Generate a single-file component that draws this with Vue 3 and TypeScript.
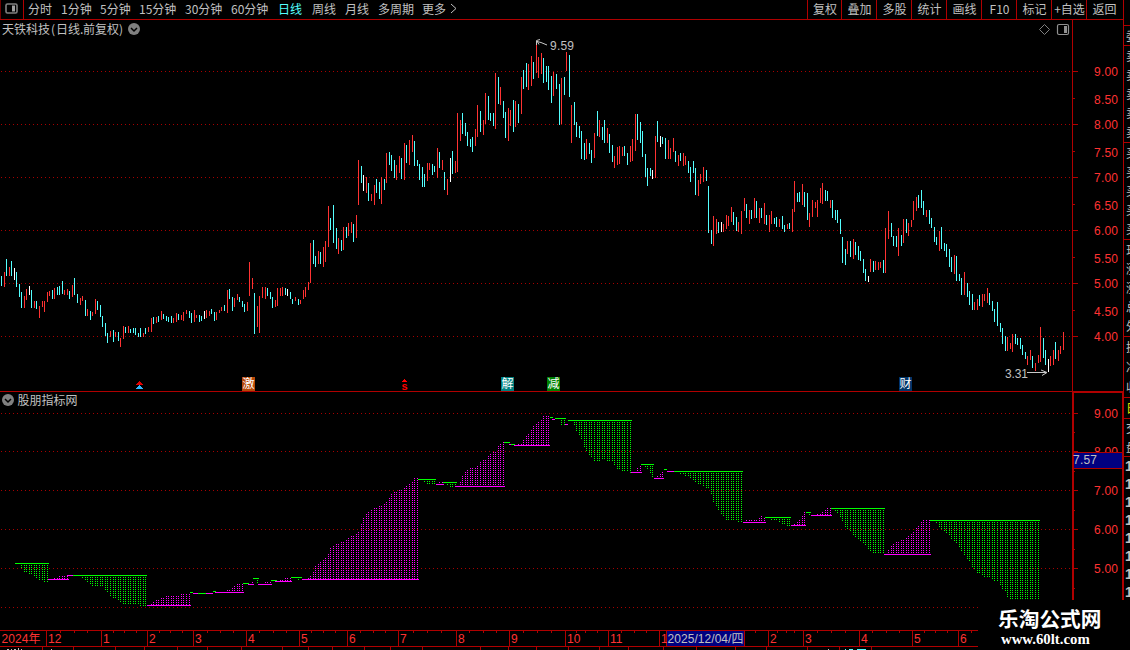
<script setup lang="ts">
type Tone = 'r' | 'c' | 'w'
interface Bar { x: number; tone: Tone; top: number; bottom: number }
interface Step { tone: 'g' | 'm'; x0: number; x1: number; y: number; edge: number[][] }

const periods = ['分时', '1分钟', '5分钟', '15分钟', '30分钟', '60分钟', '日线', '周线', '月线', '多周期', '更多']
const tools = ['复权', '叠加', '多股', '统计', '画线', 'F10', '标记', '+自选', '返回']

const priceData = `
1c276-286 4r272-287 6c259-276 9r267-276 11c261-276 14w268-280 16c272-287 19c284-297 21c292-308 24r296-308
26r289-300 29w286-295 31c290-308 34r301-308 36c301-309 39r306-318 42r301-307 44r301-312 47r292-302 49r291-296
52c290-299 54r288-299 57c287-295 59c286-295 62c281-294 64r290-295 67r289-295 69c291-299 72r285-297 74c278-295
77c294-303 80r298-305 82r296-301 85c300-316 87r309-316 90c311-320 92r312-316 95r299-314 97c301-310 100c305-317
102c316-327 105c323-336 107c333-343 110r331-337 113c330-342 115r332-337 118c332-341 120r338-347 123r326-339 125c327-333
128r326-333 130c329-333 133c328-333 135c328-335 138c333-337 140c328-337 143r333-337 145c328-334 148r327-332 151r318-332
153c317-324 156r317-323 158c316-322 161r311-320 163c314-319 166c316-321 168c317-322 171c316-323 173r318-323 176r313-322
178c314-320 181r315-320 183r312-321 186r310-314 189c311-318 191c313-323 194r310-322 196r315-318 199c315-322 201c316-321
204w311-319 206r310-318 209r311-316 211c309-314 214c312-321 216r312-320 219r310-313 221r307-311 224c305-311 227r290-313
229c289-299 232c297-311 234r298-307 237r294-300 239c297-302 242c301-307 244c304-312 247r302-311 249r262-296 252r278-289
254c293-334 257r306-327 259r296-333 262r287-298 265r287-299 267c288-296 270c292-299 272c297-308 275r300-307 277r288-306
280r288-296 282r287-296 285c288-295 287w289-296 290c292-299 292c299-304 295r297-301 298c299-305 300r300-304 303r290-299
305r287-297 308r282-290 310r243-283 313c240-264 315c256-267 318r251-264 320c252-264 323r247-267 325r241-262 328r206-247
330c218-230 333c205-243 336c228-249 338r238-254 341c240-251 343r227-250 346c227-238 348r223-236 351r222-233 353c224-242
356r215-238 358r160-205 361c166-183 363w175-191 366r177-193 368c183-201 371r194-201 374r185-205 376c179-193 379c182-199
381r177-204 384c179-190 386r153-183 389c152-165 391c155-171 394c160-178 396r165-180 399r156-173 401c158-179 404r143-180
406c145-163 409r140-165 412r135-152 414c141-166 417c160-166 419c164-180 422c167-187 424c174-187 427r163-181 429r163-170
432c164-175 434c166-172 437r148-178 439c152-168 442r160-170 444c172-190 447r179-195 450w158-182 452c151-174 455r161-173
457r113-172 460r120-141 462c113-134 465c123-136 467c132-146 470c139-147 472c137-152 475r129-146 477r105-137 480c111-132
483r120-135 485r93-124 488c96-120 490c113-121 493c113-126 495r73-129 498c77-104 500r87-105 503c101-118 505c112-138
508r108-141 510r110-126 513c100-132 515r101-127 518c104-123 521r77-114 523c70-89 526c63-87 528r64-90 531r56-86
533c62-79 536r43-73 538r57-78 541r53-74 543c58-83 546c66-82 548c66-90 551c76-103 553r72-96 556c74-89
559c84-125 561r78-124 564c77-95 566r52-71 569c55-97 571r105-143 574c102-125 576c122-137 579c126-138 581c131-159
584c143-160 586r139-159 589c143-154 591c150-163 594r133-158 597c111-136 599r120-137 602c127-140 604c120-143 607r128-143
609c134-153 612c145-162 614r156-168 617r147-165 619r146-164 622r147-156 624c146-156 627c153-165 630r146-162 632r139-161
635r114-151 637c114-140 640c122-143 642c131-157 645c154-177 647c168-186 650c168-176 652w170-179 655r136-178 657c121-142
660w136-147 662c137-144 665c138-159 668r140-159 670r148-159 673r138-152 675c151-162 678r155-166 680c153-161 683r153-166
685r156-165 688c161-173 690c167-182 693c161-173 695c168-195 698r180-196 700r174-184 703r167-182 706c170-181 708c186-233
711c230-244 713r216-246 716r219-234 718c222-233 721w222-232 723r224-232 726r215-229 728r216-226 731r207-222 733c212-225
736c217-231 738r222-232 741r211-234 744r198-211 746c204-218 749r210-224 751c210-219 754r198-218 756c201-218 759r208-223
761c208-218 764r203-224 766c215-225 769r215-232 771r211-224 774c218-224 776c217-227 779r219-227 782c216-229 784c225-232
787r224-229 789c223-229 792r209-232 794r181-212 797c193-202 799c192-202 802r184-205 804c192-207 807c193-220 809r213-227
812r200-217 815r202-208 817r200-217 820r188-203 822r183-204 825c190-201 827c191-201 830r200-208 832c200-218 835c210-220
837c210-223 840c219-234 842c237-263 845c249-265 847r241-254 850c241-257 853r239-259 855c242-255 858c246-260 860c251-261
863c259-273 865c269-281 868w276-282 870r259-272 873c261-272 875r261-270 878r262-270 880r262-268 883c260-273 885r228-273
888r211-239 891c223-237 893c236-246 896c236-247 898r228-256 901c235-246 903r219-243 906c219-233 908r223-236 911r220-227
913r201-220 916r197-211 918c195-208 921c190-208 923c201-215 926r210-217 929c210-224 931c218-228 934c227-242 936c237-245
939r231-251 941c227-249 944c243-251 946c244-257 949c249-267 951c257-272 954r255-274 956c256-281 959c274-281 961c278-295
964r272-295 967c283-297 969c291-305 972c294-310 974r302-310 977r299-310 979c295-306 982r294-307 984r294-301 987r288-303
989c293-305 992c301-311 994c309-322 997c302-326 1000c323-332 1002c328-344 1005c336-351 1007r337-351 1010r343-349 1012r334-352
1015c334-344 1017c338-345 1020c338-349 1022c345-355 1025c352-359 1027r356-365 1030r350-360 1032c356-368 1035r363-371 1038r355-363
1040r327-362 1043c338-358 1045c350-365 1048w359-372 1050r356-366 1053r350-365 1055c342-359 1058r350-361 1060r346-354 1063r332-350`

const bars: Bar[] = [...priceData.matchAll(/(\d+)([rcw])(\d+)-(\d+)/g)].map((m) => ({
  x: +m[1], tone: m[2] as Tone, top: +m[3], bottom: +m[4],
}))
const barPath = (tone: Tone) =>
  bars.filter((b) => b.tone === tone).map((b) => `M${b.x + 0.5} ${b.top}V${b.bottom}`).join('')

// tone, left, right, level, then x:y pairs of the moving edge
const stepData = `
g 15 49 563 19:564 21:568 24:571 26:572 29:573 31:573 34:575 36:577 39:579 42:580 44:581 47:581
m 48 69 579 52:579 54:578 57:577 59:576 62:575 67:575
m 67 73 575
g 73 147 575 77:575 80:576 82:577 85:579 87:581 90:583 92:585 95:586 102:586 105:589 107:592 110:595 113:597 115:598 118:600 120:602 123:604 138:604 140:605 145:605
m 147 191 605 148:605 151:603 153:602 156:600 158:600 161:598 163:597 166:596 171:596 173:595 178:595 181:594 186:593 189:593
g 190 193 592
m 193 213 593
g 198 206 593
g 213 216 591
m 215 244 592 219:592 222:591 227:590 229:589 232:587 234:585 237:584 239:583 242:583
g 243 249 583
m 248 254 584 251:584 252:581
g 253 259 578 256:578 257:583
m 258 272 584 262:584 265:582 267:581 270:581
g 271 277 580
m 275 292 581 280:580 282:579 285:577 290:577
g 291 302 577 294:578 299:579
m 302 419 579 307:579 310:576 313:571 315:566 318:564 320:561 323:559 326:556 328:553 330:548 333:545 336:543 343:542 346:539 351:536 354:535 358:532 361:523 363:518 366:514 368:511 371:510 376:507 381:506 384:503 386:501 389:497 391:494 394:492 399:489 404:488 406:485 409:484 412:481 414:478 417:478
g 418 436 479 420:479 422:480 424:482 427:484 434:484
m 436 444 484 438:484 439:482 442:482
g 443 457 482 445:482 447:485 450:486 452:487 455:487
m 455 505 486 457:485 460:481 462:475 465:471 467:469 470:468 475:467 477:466 480:462 482:461 485:459 487:456 490:453 493:451 495:451 498:445 500:443 503:441
g 504 510 442
m 509 513 444
g 511 515 444
m 514 550 445 518:444 521:444 523:439 526:436 528:433 531:430 533:426 536:424 538:421 541:419 543:416 548:416
g 550 553 417
m 552 555 419
g 555 566 418 558:418 560:420 561:425 564:425
m 565 568 424
g 568 632 420 571:421 574:424 576:430 579:434 581:439 584:446 586:450 589:454 591:457 594:460 597:460 602:459 607:460 612:461 614:465 617:468 620:469 623:470 627:471 630:472
m 631 642 472 635:471 637:467 640:465
g 641 654 464 643:464 645:466 647:468 650:472 652:477
m 654 664 478 656:478 657:476 660:473 662:471
g 664 667 469
m 667 674 471
g 674 743 471 676:471 678:472 683:474 688:476 690:477 693:479 695:481 698:483 700:484 703:486 708:487 711:494 713:501 716:506 718:509 721:513 723:516 726:519 728:520 736:520 738:521 741:522
m 743 766 522 744:521 746:519 756:519 758:517 761:516 764:517
g 765 791 517 768:517 771:519 776:520 781:522 784:524 789:525
m 791 806 525 792:525 794:524 797:522 799:519 802:515 804:512
g 806 811 512 808:512 809:514
m 811 832 515 813:515 817:514 820:513 822:511 825:509 827:508 830:508
g 831 885 508 833:508 835:510 837:513 840:517 842:521 845:527 847:529 850:530 853:534 858:538 860:540 863:542 865:545 868:548 870:551 875:552 880:553 883:553
m 884 931 554 886:553 888:550 891:546 893:543 897:542 902:540 905:537 908:536 911:534 913:532 916:528 918:525 921:522 923:520 926:519 929:519
g 930 1040 520 932:520 934:521 936:523 939:526 941:528 944:531 949:535 951:538 954:541 959:547 961:551 964:555 967:559 969:561 972:566 974:569 977:572 979:573 984:576 989:577 992:578 994:580 997:581 1000:584 1002:588 1005:591 1007:596 1010:600 1038:600`

const steps: Step[] = stepData.trim().split('\n').map((line) => {
  const [tone, x0, x1, y, ...rest] = line.split(' ')
  return { tone: tone as 'g' | 'm', x0: +x0, x1: +x1, y: +y, edge: rest.map((p) => p.split(':').map(Number)) }
})

function edgeAt(edge: number[][], x: number): number | null {
  for (let i = 1; i < edge.length; i++) {
    const [ax, ay] = edge[i - 1]
    const [bx, by] = edge[i]
    if (x >= ax && x <= bx) return Math.round(ay + ((by - ay) * (x - ax)) / (bx - ax))
  }
  return null
}
const levelPath = (tone: string) =>
  steps.filter((s) => s.tone === tone).map((s) => `M${s.x0} ${s.y + 0.5}H${s.x1}`).join('')
const columnPath = (tone: string) => {
  let d = ''
  for (const s of steps.filter((v) => v.tone === tone)) {
    // rising columns keep their dots on even rows
    const start = s.y % 2 ? s.y : s.y - 1
    for (const { x } of bars) {
      const e = edgeAt(s.edge, x)
      if (e === null || e === s.y) continue
      d += e > s.y ? `M${x + 0.5} ${s.y + 2}V${e + 1}` : `M${x + 0.5} ${start}V${e}`
    }
  }
  return d
}

const upperGrid = [71, 124, 177, 230, 283, 336]
const upperMinor = [98, 151, 204, 257, 310]
const upperLabels = [
  ['9.00', 76], ['8.50', 104], ['8.00', 129], ['7.50', 157], ['7.00', 182], ['6.50', 210],
  ['6.00', 235], ['5.50', 263], ['5.00', 288], ['4.50', 316], ['4.00', 341],
] as [string, number][]
const lowerGrid = [413, 451, 490, 529, 568, 607]
const lowerMinor = [432, 471, 510, 549, 588]
const lowerLabels = [['9.00', 418], ['8.00', 456], ['7.00', 495], ['6.00', 534], ['5.00', 573]] as [string, number][]

const badges = [
  { x: 242, label: '激', kind: 'orange' },
  { x: 501, label: '解', kind: 'teal' },
  { x: 547, label: '减', kind: 'green' },
  { x: 899, label: '财', kind: 'navy' },
]

const months = [
  ['12', 46], ['1', 101], ['2', 147], ['3', 193], ['4', 246], ['5', 299], ['6', 347], ['7', 398], ['8', 456], ['9', 509],
  ['10', 565], ['11', 608], ['1', 659], ['2', 768], ['3', 803], ['4', 859], ['5', 912], ['6', 958],
] as [string, number][]
const weekTicks = [
  60, 74, 87, 113, 124, 136, 159, 170, 182, 207, 220, 233, 259, 273, 286, 311, 323, 335, 360, 373, 385, 413, 427, 441,
  469, 483, 496, 523, 537, 551, 576, 585, 597, 621, 634, 646, 755, 777, 786, 794, 817, 831, 845, 872, 886, 899, 924,
  935, 947, 971,
]
const tabTicks = [
  42, 73, 115, 144, 177, 207, 241, 282, 308, 332, 364, 390, 422, 480, 508, 536, 568, 599, 628, 663, 696, 735, 766, 807,
  839, 871,
]

const quoteCells = [
  { h: 26, rows: [] }, { h: 20, rows: ['委'] },
  { h: 97, rows: ['卖', '卖', '卖', '卖', '卖'] },
  { h: 97, rows: ['买', '买', '买', '买', '买'] },
  { h: 97, rows: ['现', '涨', '涨', '总', '外'] },
  { h: 61, rows: ['换', '净', '收'] },
  { h: 21, rows: ['日'], hot: true },
  { h: 38, rows: ['交', '盘'] },
] as { h: number; rows: string[]; hot?: boolean }[]
</script>

<template>
  <div class="terminal">
    <div class="board">
      <header class="toolbar">
        <div class="panel-toggle">
          <svg width="13" height="11" viewBox="0 0 13 11">
            <rect x="1" y="1" width="11" height="9" rx="1.5" fill="none" stroke="#808080" stroke-width="1.6" />
            <rect x="7" y="2.5" width="3" height="6" fill="#a0a0a0" />
          </svg>
        </div>
        <nav class="periods">
          <span v-for="p in periods" :key="p" :class="{ active: p === '日线' }">{{ p }}</span>
          <svg width="8" height="11" viewBox="0 0 8 11"><path d="M1 1L6 5.5L1 10" fill="none" stroke="#c0c0c0" /></svg>
        </nav>
        <nav class="tools">
          <span v-for="t in tools" :key="t">{{ t }}</span>
        </nav>
      </header>

      <svg class="pane" width="1124" height="371" viewBox="0 20 1124 371">
        <g class="grid"><path v-for="y in upperGrid" :key="y" :d="`M1 ${y + 0.5}H1070`" /></g>
        <g class="bars">
          <path class="up" :d="barPath('r')" />
          <path class="down" :d="barPath('c')" />
          <path class="flat" :d="barPath('w')" />
        </g>
        <text class="caption" x="2" y="34" textLength="48">天铁科技</text>
        <text class="caption" x="51" y="34">(</text>
        <text class="caption" x="56" y="34" textLength="24">日线</text>
        <text class="caption" x="80" y="34">.</text>
        <text class="caption" x="83" y="34" textLength="36">前复权</text>
        <text class="caption" x="119" y="34">)</text>
        <circle cx="134" cy="29" r="6" fill="#808080" />
        <path d="M131 28L134 31L137 28" fill="none" stroke="#000" stroke-width="1.5" />
        <path d="M1044.500 24.500L1049.500 29.500L1044.500 34.500L1039.500 29.500Z" fill="none" stroke="#808080" />
        <rect x="1057.500" y="24.500" width="11" height="10" rx="1.500" fill="none" stroke="#909090" stroke-width="1.200" />
        <rect x="1064" y="26" width="3" height="7" fill="#909090" />

        <g class="pointer">
          <path d="M537 41.500L541 42.500L547 45M536.500 45V40.500L540 39.500M537 41L539 44.500" />
          <path d="M1027 372.500H1046M1041 370L1047 372.500L1042 375.500" />
        </g>
        <text class="note" x="550" y="50" textLength="24">9.59</text>
        <text class="note" x="1005" y="378" textLength="23">3.31</text>

        <g shape-rendering="crispEdges">
          <path d="M139 381h1v1h1v1h1v1h1v1h-7v-1h1v-1h1v-1h1z" fill="#e00000" />
          <path d="M139 385h1v1h1v1h1v1h1v1h-7v-1h1v-1h1v-1h1z" fill="#30b8ff" />
          <path d="M404 379h1v1h1v1h1v1h-5v-1h1v-1h1z" fill="#f00" />
        </g>
        <text class="signal" x="401.500" y="389.500">s</text>
        <g v-for="b in badges" :key="b.x">
          <rect :class="b.kind" :x="b.x" y="377" width="13" height="14" />
          <text class="badge" :x="b.x + 0.500" y="388">{{ b.label }}</text>
        </g>

        <g class="axis">
          <path d="M1072.500 20V391M1123.500 20V391" />
          <path v-for="y in upperGrid" :key="y" :d="`M1073 ${y + 0.5}h5`" />
          <path v-for="y in upperMinor" :key="y" :d="`M1073 ${y + 0.5}h2`" />
        </g>
        <text v-for="[t, y] in upperLabels" :key="t" class="scale" x="1094" :y="y" textLength="24">{{ t }}</text>
      </svg>

      <svg class="pane" width="1124" height="239" viewBox="0 391 1124 239">
        <g class="grid"><path v-for="y in lowerGrid" :key="y" :d="`M1 ${y + 0.5}H1070`" /></g>
        <g class="steps">
          <path class="dots green-line" :d="columnPath('g')" />
          <path class="dots pink-line" :d="columnPath('m')" />
          <path class="pink-line" :d="levelPath('m')" />
          <path class="green-line" :d="levelPath('g')" />
        </g>
        <circle cx="8" cy="400" r="6" fill="#808080" />
        <path d="M5 399L8 402L11 399" fill="none" stroke="#000" stroke-width="1.500" />
        <text class="caption" x="17.500" y="405" textLength="60">股朋指标网</text>
        <text v-for="[t, y] in lowerLabels" :key="t" class="scale" x="1094" :y="y" textLength="24">{{ t }}</text>
        <g class="axis">
          <path d="M0 391.500H1124" />
          <path d="M1073 630V392H1123V630" stroke-width="2" />
          <path v-for="y in lowerGrid" :key="y" :d="`M1074 ${y + 0.5}h4`" />
          <path v-for="y in lowerMinor" :key="y" :d="`M1074 ${y + 0.5}h1`" />
        </g>
        <rect x="1074" y="452" width="48" height="17" fill="#000080" />
        <path class="axis" d="M1074 452.500H1122M1074 468.500H1122" />
        <text class="note" x="1073" y="464" textLength="24">7.57</text>
      </svg>

      <svg class="pane" width="1124" height="20" viewBox="0 630 1124 20">
        <g class="axis">
          <path d="M0 630.500H1124M0 646.500H1124" />
          <path v-for="[t, x] in months" :key="x" :d="`M${x + 0.5} 631V646`" />
          <path v-for="x in weekTicks" :key="x" :d="`M${x + 0.5} 631v2`" />
          <path v-for="x in tabTicks" :key="x" :d="`M${x + 0.5} 647v3`" />
          <path d="M666.500 631V646M744.500 631V646" />
        </g>
        <text class="scale" x="1.500" y="643" textLength="39">2024年</text>
        <text v-for="[t, x] in months" :key="x" class="scale" :x="x + 2" y="643">{{ t }}</text>
        <rect x="667" y="631" width="77" height="15" fill="#000080" />
        <text class="note" x="667.500" y="643" textLength="76">2025/12/04/四</text>
        <g fill="#c0c0c0">
          <path d="M7 649h2v1h-2zM11 649h1v1h-1zM14 649h2v1h-2zM18 648h1v2h-1zM21 649h1v1h-1zM51 649h1v1h-1zM828 649h1v1h-1z" />
          <path d="M845 649h1v1h-1zM849 649h4v1h-4zM857 649h9v1h-9z" fill="#54ffff" />
        </g>
      </svg>
    </div>

    <aside class="quotes">
      <div v-for="(c, i) in quoteCells" :key="i" class="cell" :class="{ hot: c.hot }" :style="{ height: c.h + 'px' }">
        <span v-for="(r, j) in c.rows" :key="j">{{ r }}</span>
      </div>
      <div class="ticks"><b v-for="n in 8" :key="n">1</b></div>
    </aside>

    <div class="stamp">
      <strong>乐淘公式网</strong>
      <em>www.60lt.com</em>
    </div>
  </div>
</template>

<style>
body { background: #000; overflow: hidden; }
</style>

<style scoped>
.terminal {
  position: relative;
  display: flex;
  width: 1130px;
  height: 650px;
  overflow: hidden;
  background: #000;
  color: #c0c0c0;
  font: 400 12px/17px "Noto Sans CJK SC", sans-serif;
}
.board { width: 1124px; display: flex; flex-direction: column; }
.toolbar {
  box-sizing: border-box;
  display: flex;
  height: 20px;
  border-right: 1px solid #b00000;
  border-bottom: 1px solid #b00000;
  white-space: nowrap;
}
.panel-toggle {
  box-sizing: border-box;
  width: 24px;
  padding: 3px 0 0 5px;
  border-left: 1px solid #700000;
  border-right: 1px solid #b00000;
  line-height: 0;
}
.panel-toggle svg { margin-left: -1px; }
.periods {
  display: grid;
  grid-template-columns: 33px 39px 39px 46px 46px 47px 34px 33px 33px 44px 28px 10px;
  padding-left: 4px;
  width: 779px;
}
.periods svg { margin-top: 3px; }
.active { color: #54ffff; }
.tools { display: grid; grid-template-columns: 34px repeat(8, 35px); flex: 1; }
.tools span { padding-left: 1px; border-left: 1px solid #b00000; text-align: center; }
.pane { display: block; flex: none; }
.grid { stroke: #a80000; stroke-dasharray: 1 3; shape-rendering: crispEdges; }
.bars path { shape-rendering: crispEdges; }
.up { stroke: #ff3232; }
.down { stroke: #54ffff; }
.flat { stroke: #fff; }
.steps path { shape-rendering: crispEdges; }
.dots { stroke-dasharray: 1 1; }
.green-line { stroke: #00ff00; }
.pink-line { stroke: #ff00ff; }
.axis { stroke: #b00000; fill: none; shape-rendering: crispEdges; }
.caption { font-size: 12px; fill: #c0c0c0; }
.note, .scale { font: 12px "Liberation Sans", "Noto Sans CJK SC", sans-serif; fill: #c0c0c0; }
.scale { fill: #ff3232; }
.pointer { fill: none; stroke: #c8c8c8; }
.signal { font: bold 11px "Liberation Sans", sans-serif; fill: #f00; }
.badge { font-size: 12px; fill: #fff; }
.orange { fill: #b84808; }
.teal { fill: #008080; }
.green { fill: #008000; }
.navy { fill: #003468; }
.quotes { width: 6px; overflow: hidden; }
.cell {
  box-sizing: border-box;
  display: flex;
  flex-direction: column;
  justify-content: space-around;
  padding-left: 2px;
  border-bottom: 1px solid #b00000;
  overflow: hidden;
}
.cell span { width: 12px; line-height: 18px; }
.hot { color: #e0e000; }
.ticks { display: flex; flex-direction: column; }
.ticks b { padding-left: 1px; font: bold 14px/18px "Liberation Sans", sans-serif; }
.stamp {
  position: absolute;
  left: 978px;
  top: 600px;
  box-sizing: border-box;
  width: 152px;
  height: 50px;
  padding: 7px 0 0 20px;
  background: #000;
  color: #fff;
}
.stamp strong { display: block; font-size: 20.7px; font-weight: 700; line-height: 22px; white-space: nowrap; }
.stamp em { display: block; margin: 1px 0 0 3px; font: bold 14.8px/18px "Liberation Serif", serif; }
</style>
